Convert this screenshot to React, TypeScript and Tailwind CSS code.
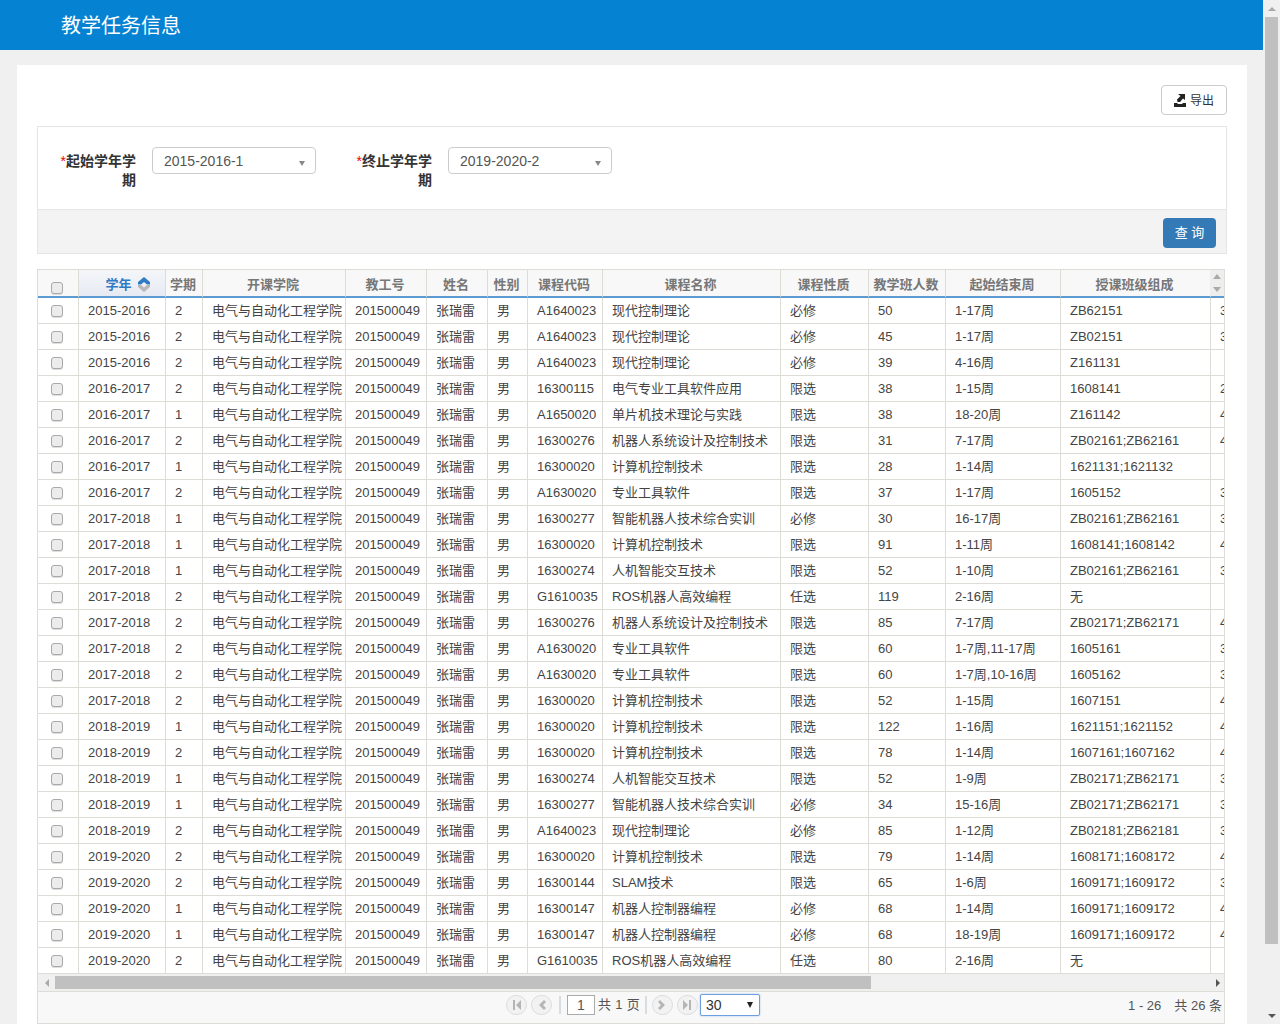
// 学年, 学期, 课程代码, 课程名称, 课程性质, 人数, 周, 班级, 下一列首字
const rows: string[][] = [
  ["2015-2016", "2", "A1640023", "现代控制理论", "必修", "50", "1-17周", "ZB62151", "3"],
  ["2015-2016", "2", "A1640023", "现代控制理论", "必修", "45", "1-17周", "ZB02151", "3"],
  ["2015-2016", "2", "A1640023", "现代控制理论", "必修", "39", "4-16周", "Z161131", ""],
  ["2016-2017", "2", "16300115", "电气专业工具软件应用", "限选", "38", "1-15周", "1608141", "2"],
  ["2016-2017", "1", "A1650020", "单片机技术理论与实践", "限选", "38", "18-20周", "Z161142", "4"],
  ["2016-2017", "2", "16300276", "机器人系统设计及控制技术", "限选", "31", "7-17周", "ZB02161;ZB62161", "4"],
  ["2016-2017", "1", "16300020", "计算机控制技术", "限选", "28", "1-14周", "1621131;1621132", ""],
  ["2016-2017", "2", "A1630020", "专业工具软件", "限选", "37", "1-17周", "1605152", "3"],
  ["2017-2018", "1", "16300277", "智能机器人技术综合实训", "必修", "30", "16-17周", "ZB02161;ZB62161", "3"],
  ["2017-2018", "1", "16300020", "计算机控制技术", "限选", "91", "1-11周", "1608141;1608142", "4"],
  ["2017-2018", "1", "16300274", "人机智能交互技术", "限选", "52", "1-10周", "ZB02161;ZB62161", "3"],
  ["2017-2018", "2", "G1610035", "ROS机器人高效编程", "任选", "119", "2-16周", "无", ""],
  ["2017-2018", "2", "16300276", "机器人系统设计及控制技术", "限选", "85", "7-17周", "ZB02171;ZB62171", "4"],
  ["2017-2018", "2", "A1630020", "专业工具软件", "限选", "60", "1-7周,11-17周", "1605161", "3"],
  ["2017-2018", "2", "A1630020", "专业工具软件", "限选", "60", "1-7周,10-16周", "1605162", "3"],
  ["2017-2018", "2", "16300020", "计算机控制技术", "限选", "52", "1-15周", "1607151", "4"],
  ["2018-2019", "1", "16300020", "计算机控制技术", "限选", "122", "1-16周", "1621151;1621152", "4"],
  ["2018-2019", "2", "16300020", "计算机控制技术", "限选", "78", "1-14周", "1607161;1607162", "4"],
  ["2018-2019", "1", "16300274", "人机智能交互技术", "限选", "52", "1-9周", "ZB02171;ZB62171", "3"],
  ["2018-2019", "1", "16300277", "智能机器人技术综合实训", "必修", "34", "15-16周", "ZB02171;ZB62171", "3"],
  ["2018-2019", "2", "A1640023", "现代控制理论", "必修", "85", "1-12周", "ZB02181;ZB62181", "3"],
  ["2019-2020", "2", "16300020", "计算机控制技术", "限选", "79", "1-14周", "1608171;1608172", "4"],
  ["2019-2020", "2", "16300144", "SLAM技术", "限选", "65", "1-6周", "1609171;1609172", "3"],
  ["2019-2020", "1", "16300147", "机器人控制器编程", "必修", "68", "1-14周", "1609171;1609172", "4"],
  ["2019-2020", "1", "16300147", "机器人控制器编程", "必修", "68", "18-19周", "1609171;1609172", "4"],
  ["2019-2020", "2", "G1610035", "ROS机器人高效编程", "任选", "80", "2-16周", "无", ""],
];

const headers = ["学期", "开课学院", "教工号", "姓名", "性别", "课程代码", "课程名称", "课程性质", "教学班人数", "起始结束周", "授课班级组成", ""];

const Checkbox = () => (
  <span className="block w-3 h-3 ml-[13px] rounded-[3px] border border-[#a9a9a9] bg-[#ececec] shadow-[0_1px_0_#ddd]" />
);

const Td = ({ children }: { children?: React.ReactNode }) => (
  <td className="h-[26px] border-r border-b border-[#dddcd6] p-0 pl-[9px] text-[13px] text-[#444] whitespace-nowrap overflow-hidden">
    {children}
  </td>
);

const Select = ({ value }: { value: string }) => (
  <div className="w-[164px] h-[27px] border border-[#ccc] rounded-[4px] bg-white pl-[11px] pr-[10px] flex items-center justify-between text-sm text-[#555]">
    <span>{value}</span>
    <span className="mt-[6px] w-0 h-0 border-x-[3.5px] border-x-transparent border-t-[5px] border-t-[#888]" />
  </div>
);

const Field = ({ first, value }: { first: string; value: string }) => (
  <div className="flex items-start gap-4">
    <div className="w-[76px] pt-[5px] text-right text-sm font-bold leading-[19px] text-[#333]">
      <span className="text-[#e00] font-normal">*</span>
      {first}
      <br />期
    </div>
    <Select value={value} />
  </div>
);

const PagerBtn = ({ d }: { d: string }) => (
  <span className="w-[21px] h-[20px] rounded-full border border-[#ddd] bg-[#f2f2f2] flex items-center justify-center">
    <svg width="10" height="12" viewBox="0 0 10 12">
      <path d={d} fill="#b5b5b5" />
    </svg>
  </span>
);

export default function App() {
  return (
    <div className="h-screen overflow-hidden flex bg-[#f0f0f0] font-['Liberation_Sans','Noto_Sans_CJK_SC',sans-serif]">
      <div className="w-[1263px] shrink-0">
        <header className="h-[50px] bg-[#0583d2] flex items-center pl-[61px] pt-[2px] text-[20px] text-white">
          教学任务信息
        </header>

        <main className="mt-[15px] ml-[17px] w-[1230px] bg-white pl-5 pr-5 pt-5">
          <div className="flex justify-end h-[41px]">
            <button className="w-[66px] h-[30px] border border-[#ccc] rounded-[4px] flex items-center justify-center gap-1 pt-[1px] text-xs text-[#333]">
              <svg width="12" height="13" viewBox="0 0 12 13">
                <path d="M0 9h3l1 1h4l1-1h3v4H0z" fill="#222" />
                <path d="M4 0h7v6L9 4.500 6 8H3.500L3 5.500 6.500 2z" fill="#222" />
              </svg>
              导出
            </button>
          </div>

          <section className="border border-[#e5e5e5]">
            <div className="h-[82px] pl-[22px] pt-5 flex gap-10">
              <Field first="起始学年学" value="2015-2016-1" />
              <Field first="终止学年学" value="2019-2020-2" />
            </div>
            <div className="h-[44px] border-t border-[#e5e5e5] bg-[#f3f3f3] flex justify-end items-start pt-2 pr-[10px]">
              <button className="w-[53px] h-[30px] rounded-[4px] bg-[#337ab7] text-white text-[13px]">查 询</button>
            </div>
          </section>

          <section className="relative mt-[15px] w-[1188px] border-l border-r border-t border-[#dddcd6]">
            <div className="overflow-hidden">
              <table className="table-fixed border-separate border-spacing-0 w-[1303px]">
                <colgroup>
                  <col className="w-[41px]" />
                  <col className="w-[87px]" />
                  <col className="w-[37px]" />
                  <col className="w-[143px]" />
                  <col className="w-[81px]" />
                  <col className="w-[61px]" />
                  <col className="w-[40px]" />
                  <col className="w-[75px]" />
                  <col className="w-[178px]" />
                  <col className="w-[88px]" />
                  <col className="w-[77px]" />
                  <col className="w-[115px]" />
                  <col className="w-[150px]" />
                  <col className="w-[130px]" />
                </colgroup>
                <thead>
                  <tr className="bg-[#f8f8f8]">
                    <th className="h-[28px] border-r border-[#dddcd6] border-b-2 border-b-[#5b9bd1] p-0 align-bottom pb-[2px]">
                      <Checkbox />
                    </th>
                    <th className="h-[28px] border-r border-[#dddcd6] border-b-2 border-b-[#5b9bd1] p-0 pt-[3px] text-[13px] font-bold text-[#2f7bc4] bg-gradient-to-b from-[#f4f6f9] to-[#e6eaf2]">
                      <span className="inline-flex items-center gap-[6px] pl-[11px]">
                        学年
                        <svg width="12" height="15" viewBox="0 0 12 15">
                          <path d="M6 0l6 5v2.500H9L6 5 3 7.500H0V5z" fill="#2f7bc4" />
                          <path d="M6 15L0 10V8h3l3 2.500L9 8h3v2z" fill="#b8b8b8" />
                        </svg>
                      </span>
                    </th>
                    {headers.map((h) => (
                      <th
                        key={h}
                        className="h-[28px] border-r border-[#dddcd6] border-b-2 border-b-[#5b9bd1] p-0 pt-[3px] pr-[2px] text-[13px] font-bold text-[#777] whitespace-nowrap"
                      >
                        {h}
                      </th>
                    ))}
                  </tr>
                </thead>
                <tbody>
                  {rows.map((r, i) => (
                    <tr key={i}>
                      <td className="h-[26px] border-r border-b border-[#dddcd6] p-0">
                        <Checkbox />
                      </td>
                      <Td>{r[0]}</Td>
                      <Td>{r[1]}</Td>
                      <Td>电气与自动化工程学院</Td>
                      <Td>201500049</Td>
                      <Td>张瑞雷</Td>
                      <Td>男</Td>
                      <Td>{r[2]}</Td>
                      <Td>{r[3]}</Td>
                      <Td>{r[4]}</Td>
                      <Td>{r[5]}</Td>
                      <Td>{r[6]}</Td>
                      <Td>{r[7]}</Td>
                      <Td>{r[8]}</Td>
                    </tr>
                  ))}
                </tbody>
              </table>
            </div>

            {/* header scroll arrows */}
            <div className="absolute right-0 top-0 w-[14px] h-[26px] bg-[#eeeeee] flex flex-col items-center justify-center gap-[8px]">
              <span className="w-0 h-0 border-x-[4px] border-x-transparent border-b-[5px] border-b-[#aaa]" />
              <span className="w-0 h-0 border-x-[4px] border-x-transparent border-t-[5px] border-t-[#aaa]" />
            </div>

            {/* horizontal scrollbar */}
            <div className="h-[17px] bg-[#f0f0f0] flex items-center">
              <div className="w-[17px] flex justify-center">
                <span className="w-0 h-0 border-y-[4px] border-y-transparent border-r-[4px] border-r-[#aaa]" />
              </div>
              <div className="w-[816px] h-[13px] bg-[#c0c0c0]" />
              <div className="flex-1" />
              <div className="w-[12px] flex justify-center">
                <span className="w-0 h-0 border-y-[4px] border-y-transparent border-l-[4px] border-l-[#555]" />
              </div>
            </div>

            <div className="relative h-[33px] border-t border-b border-[#dddcd6] bg-[#f8f8f8] flex items-start pt-[1px] text-[13px] text-[#555]">
              <div className="ml-[468px] flex items-center h-[24px]">
                <div className="flex gap-1">
                  <PagerBtn d="M1 1h2v10H1zM9 1v10L4 6z" />
                  <PagerBtn d="M7 1l2 2-3 3 3 3-2 2-5-5z" />
                </div>
                <span className="ml-[7px] mr-[6px] w-[2px] h-[18px] bg-[#d8dde2]" />
                <span className="w-[28px] h-[20px] border border-[#aaa] bg-white flex items-center justify-center text-sm">1</span>
                <span className="ml-[3px] tracking-[0.3px]">共 1 页</span>
                <span className="ml-[5px] mr-[5px] w-[2px] h-[18px] bg-[#d8dde2]" />
                <div className="flex gap-[4px]">
                  <PagerBtn d="M3 1L1 3l3 3-3 3 2 2 5-5z" />
                  <PagerBtn d="M1 1v10l5-5zM7 1h2v10H7z" />
                </div>
                <div className="ml-[2px] w-[60px] h-[22px] border border-[#6ea0e0] rounded-[2px] bg-white pl-[5px] pr-[6px] flex items-center justify-between text-sm text-[#333] shadow-[0_0_2px_#9cc0f0]">
                  30
                  <span className="w-0 h-0 border-x-[3.5px] border-x-transparent border-t-[6px] border-t-[#222]" />
                </div>
              </div>
              <div className="absolute right-[2px] top-[4px] flex gap-[13px]">
                <span>1 - 26</span>
                <span>共 26 条</span>
              </div>
            </div>
          </section>
        </main>
      </div>

      {/* browser scrollbar */}
      <aside className="w-[17px] h-screen flex flex-col items-center">
        <div className="h-[17px] flex items-center">
          <span className="w-0 h-0 border-x-[4px] border-x-transparent border-b-[4px] border-b-[#aaa]" />
        </div>
        <div className="w-[13px] h-[927px] bg-[#c0c0c0]" />
        <div className="flex-1" />
        <div className="h-[17px] flex items-center">
          <span className="w-0 h-0 border-x-[4px] border-x-transparent border-t-[4px] border-t-[#555]" />
        </div>
      </aside>
    </div>
  );
}
